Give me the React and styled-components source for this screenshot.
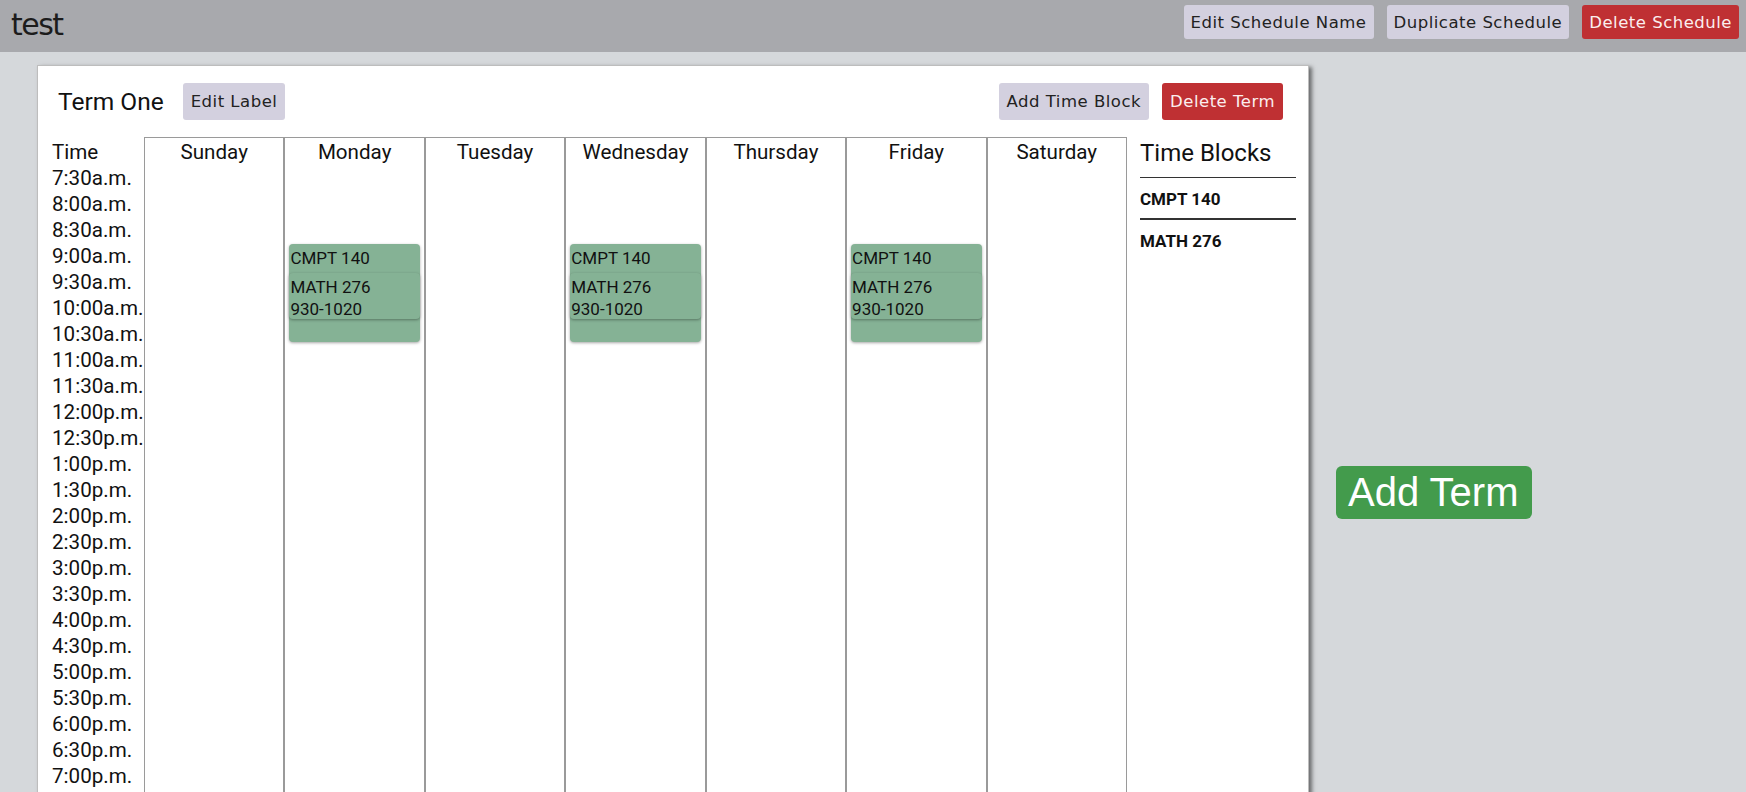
import React from "react";
import styled, { createGlobalStyle } from "styled-components";

const GlobalStyle = createGlobalStyle`
  html, body {
    margin: 0;
    padding: 0;
    background: #d5d8db;
    font-family: Roboto, "Noto Sans", sans-serif;
    color: #111;
  }
  * { box-sizing: border-box; }
`;

const BUTTON_FONT = `"DejaVu Sans", "Open Sans", sans-serif`;

const TopBar = styled.header`
  display: flex;
  justify-content: space-between;
  align-items: flex-start;
  height: 52px;
  padding: 5px 7px 0 11px;
  background: #a8a9ad;
`;

const AppTitle = styled.h1`
  margin: 3px 0 0;
  font-family: ${BUTTON_FONT};
  font-weight: 400;
  font-size: 30px;
  letter-spacing: -1.5px;
  line-height: 34px;
  color: #1c1c1c;
`;

const ButtonGroup = styled.div`
  display: flex;
  gap: 13px;
  margin-left: ${(p) => (p.$push ? "auto" : "0")};
`;

const ActionButton = styled.button`
  font-family: ${BUTTON_FONT};
  font-size: 16.5px;
  letter-spacing: 0.5px;
  height: ${(p) => (p.$tall ? "37px" : "34px")};
  padding: 0 ${(p) => (p.$tall ? "8px" : "7px")};
  border: none;
  border-radius: 3px;
  cursor: pointer;
  background: ${(p) => (p.$danger ? "#bf3033" : "#d3d0df")};
  color: ${(p) => (p.$danger ? "#fbeeee" : "#222")};
`;

const Main = styled.main`
  display: flex;
  align-items: center;
  gap: 27px;
  padding: 13px 0 0 37px;
`;

const TermPanel = styled.section`
  flex: 0 0 1272px;
  background: #fff;
  border: 1px solid #bdbdbd;
  box-shadow: 3px 2px 4px rgba(0, 0, 0, 0.5);
  padding: 0 12px 25px 14px;
`;

const TermHeader = styled.div`
  display: flex;
  align-items: center;
  gap: 19px;
  padding: 17px 13px 17px 6px;
`;

const TermTitle = styled.h2`
  margin: 0;
  font-family: Roboto, sans-serif;
  font-weight: 400;
  font-size: 24.5px;
  line-height: 28px;
  color: #111;
`;

const TermBody = styled.div`
  display: flex;
  align-items: stretch;
`;

const TimeColumn = styled.div`
  flex: 0 0 92px;
  padding-top: 2px;
  font-size: 20.6px;
  line-height: 26px;
  white-space: nowrap;
`;

const TimeLabel = styled.div`
  height: 26px;
`;

const DayGrid = styled.div`
  flex: 0 0 983px;
  display: flex;
`;

const DayColumn = styled.div`
  position: relative;
  flex: 1 1 0;
  border: 1px solid #9a9a9a;
  padding-top: 1px;
`;

const DayName = styled.div`
  text-align: center;
  font-size: 20.6px;
  line-height: 26px;
`;

const EventBlock = styled.div`
  position: absolute;
  left: 4px;
  right: 4px;
  padding: 4px 1px 0;
  background: #85b295;
  border-radius: 4px;
  box-shadow: 0 1px 3px rgba(0, 0, 0, 0.35);
  font-size: 17px;
  line-height: 21.5px;
  color: #111;
  overflow: hidden;
`;

const Sidebar = styled.aside`
  flex: 0 0 156px;
  margin-left: 13px;
  padding-top: 2px;
`;

const SidebarTitle = styled.h3`
  margin: 0;
  padding: 0 0 10px;
  font-weight: 400;
  font-size: 24px;
  line-height: 28px;
  border-bottom: 1px solid #333;
`;

const BlockItem = styled.div`
  padding: 12px 0 9px;
  font-weight: 700;
  font-size: 17px;
  line-height: 19px;
  border-bottom: ${(p) => (p.$last ? "none" : "2px solid #333")};
`;

const AddTermButton = styled.button`
  font-family: "Liberation Sans", Arial, sans-serif;
  font-size: 40px;
  line-height: 46px;
  padding: 3px 14px 4px 12px;
  border: none;
  border-radius: 6px;
  background: #439b4c;
  color: #fff;
  cursor: pointer;
`;

const days = ["Sunday", "Monday", "Tuesday", "Wednesday", "Thursday", "Friday", "Saturday"];

const times = [];
for (let t = 7.5; t <= 21; t += 0.5) {
  const h = Math.floor(t);
  const m = t % 1 ? "30" : "00";
  const suffix = h < 12 ? "a.m." : "p.m.";
  const dh = h > 12 ? h - 12 : h;
  times.push(`${dh}:${m}${suffix}`);
}

const events = [
  { name: "CMPT 140", top: 106, height: 98 },
  { name: "MATH 276", range: "930-1020", top: 135, height: 46 },
];
const eventDays = ["Monday", "Wednesday", "Friday"];

export default function App() {
  return (
    <>
      <GlobalStyle />
      <TopBar>
        <AppTitle>test</AppTitle>
        <ButtonGroup>
          <ActionButton>Edit Schedule Name</ActionButton>
          <ActionButton>Duplicate Schedule</ActionButton>
          <ActionButton $danger>Delete Schedule</ActionButton>
        </ButtonGroup>
      </TopBar>
      <Main>
        <TermPanel>
          <TermHeader>
            <TermTitle>Term One</TermTitle>
            <ActionButton $tall>Edit Label</ActionButton>
            <ButtonGroup $push>
              <ActionButton $tall>Add Time Block</ActionButton>
              <ActionButton $tall $danger>Delete Term</ActionButton>
            </ButtonGroup>
          </TermHeader>
          <TermBody>
            <TimeColumn>
              <TimeLabel>Time</TimeLabel>
              {times.map((t) => (
                <TimeLabel key={t}>{t}</TimeLabel>
              ))}
            </TimeColumn>
            <DayGrid>
              {days.map((d) => (
                <DayColumn key={d}>
                  <DayName>{d}</DayName>
                  {eventDays.includes(d) &&
                    events.map((e) => (
                      <EventBlock key={e.name} style={{ top: e.top, height: e.height }}>
                        <div>{e.name}</div>
                        {e.range && <div>{e.range}</div>}
                      </EventBlock>
                    ))}
                </DayColumn>
              ))}
            </DayGrid>
            <Sidebar>
              <SidebarTitle>Time Blocks</SidebarTitle>
              <BlockItem>CMPT 140</BlockItem>
              <BlockItem $last>MATH 276</BlockItem>
            </Sidebar>
          </TermBody>
        </TermPanel>
        <AddTermButton>Add Term</AddTermButton>
      </Main>
    </>
  );
}
